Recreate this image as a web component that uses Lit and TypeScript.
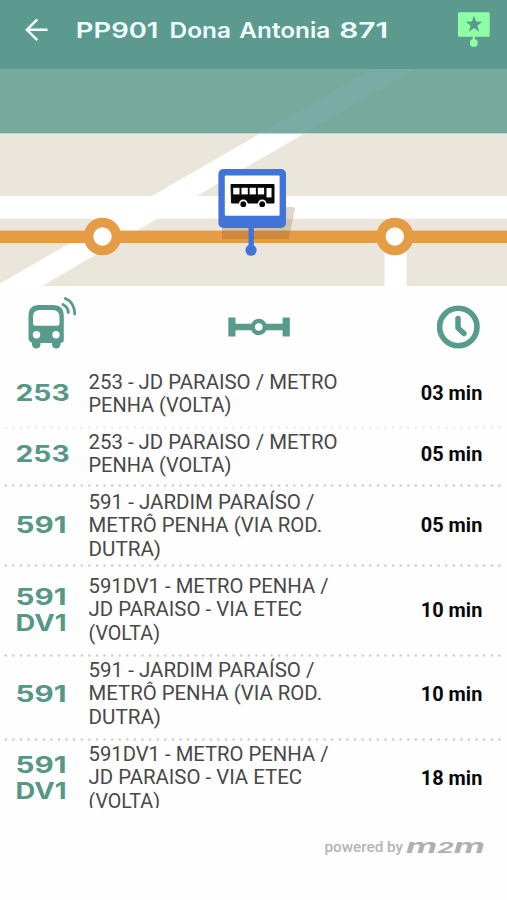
import { LitElement, html, svg, css } from "lit";
import { customElement, property } from "lit/decorators.js";
import { classMap } from "lit/directives/class-map.js";

interface Arrival {
  code: { text: string; width: number }[];
  lines: { text: string; width: number }[];
  wait: string;
  height: number;
  faint?: boolean;
  lift: number;
}

const line253 = {
  code: [{ text: "253", width: 54 }],
  lines: [
    { text: "253 - JD PARAISO / METRO", width: 249 },
    { text: "PENHA (VOLTA)", width: 143 },
  ],
};
const line591 = {
  code: [{ text: "591", width: 51 }],
  lines: [
    { text: "591 - JARDIM PARAÍSO /", width: 226 },
    { text: "METRÔ PENHA (VIA ROD.", width: 233.5 },
    { text: "DUTRA)", width: 72.5 },
  ],
};
const line591dv1 = {
  code: [
    { text: "591", width: 51 },
    { text: "DV1", width: 51 },
  ],
  lines: [
    { text: "591DV1 - METRO PENHA /", width: 240 },
    { text: "JD PARAISO - VIA ETEC", width: 213.5 },
    { text: "(VOLTA)", width: 71.5 },
  ],
};

const ARRIVALS: Arrival[] = [
  { ...line253, wait: "03 min", height: 61, faint: true, lift: 7 },
  { ...line253, wait: "05 min", height: 58, lift: 5 },
  { ...line591, wait: "05 min", height: 80, lift: 0 },
  { ...line591dv1, wait: "10 min", height: 90, lift: 1 },
  { ...line591, wait: "10 min", height: 84, lift: 7 },
  { ...line591dv1, wait: "18 min", height: 90, lift: 13 },
];

const TITLE = [
  { text: "PP901", x: 75.8, width: 82.5 },
  { text: "Dona", x: 169.5, width: 61.5 },
  { text: "Antonia", x: 239.3, width: 91 },
  { text: "871", x: 339.2, width: 49 },
];

@customElement("arrival-row")
class ArrivalRow extends LitElement {
  @property({ attribute: false }) arrival!: Arrival;

  static styles = css`
    :host { display: block; }
    .row {
      box-sizing: border-box;
      position: relative;
      display: grid;
      grid-template-columns: 72px 1fr 90px;
      align-items: center;
      padding: 0 25px 0 16px;
    }
    .row::after {
      content: "";
      position: absolute;
      left: 2px;
      right: 4px;
      bottom: -1.5px;
      height: 3px;
      background: radial-gradient(circle at center, #cacaca 0.8px, transparent 1.7px) 0 0 / 7.6px 3px repeat-x;
    }
    .faint::after { opacity: 0.4; }
    svg { display: block; overflow: visible; }
    .code {
      font: 650 22.4px Inter, sans-serif;
      fill: #579788;
    }
    .name {
      font: 400 19.5px Roboto, sans-serif;
      fill: #484848;
    }
    .wait {
      font: 700 19.6px Roboto, sans-serif;
      fill: #080808;
    }
    .time { justify-self: end; }
  `;

  render() {
    const a = this.arrival;
    return html`
      <div
        class=${classMap({ row: true, faint: !!a.faint })}
        style="height:${a.height}px;padding-bottom:${a.lift}px"
      >
        <svg width="60" height=${a.code.length * 26}>
          ${a.code.map(
            (c, i) => svg`<text class="code" x="-0.4" y=${20.8 + i * 26} textLength=${c.width} lengthAdjust="spacingAndGlyphs">${c.text}</text>`
          )}
        </svg>
        <svg width="260" height=${a.lines.length * 23.4}>
          ${a.lines.map(
            (l, i) => svg`<text class="name" x="0.5" y=${19 + i * 23.4} textLength=${l.width} lengthAdjust="spacingAndGlyphs">${l.text}</text>`
          )}
        </svg>
        <svg class="time" width="62" height="24">
          <text class="wait" x="0.8" y="19" textLength="61.5" lengthAdjust="spacingAndGlyphs">${a.wait}</text>
        </svg>
      </div>
    `;
  }
}

@customElement("app-root")
class AppRoot extends LitElement {
  static styles = css`
    :host {
      display: flex;
      flex-direction: column;
      width: 507px;
      height: 900px;
      background: #fefefe;
      overflow: hidden;
    }
    svg { display: block; flex: none; }
    .bar {
      flex: none;
      height: 69px;
      background: #5c9a90;
    }
    .title {
      font: 600 21.6px Inter, sans-serif;
      fill: #effffb;
    }
    .map { flex: none; }
    .heads {
      flex: none;
      height: 80px;
      display: flex;
      align-items: center;
      justify-content: space-between;
      padding: 2px 26px 0 28px;
      box-sizing: border-box;
    }
    .list {
      flex: none;
      height: 442px;
      overflow: hidden;
    }
    .foot {
      display: flex;
      justify-content: flex-end;
      padding: 27px 21px 0 0;
    }
    .powered {
      font: 500 14.6px Roboto, sans-serif;
      fill: #b4b4b4;
    }
    .brand {
      font: italic 700 19px Inter, sans-serif;
      fill: #b0b0b0;
    }
    .brand-digit { font-size: 14.8px; }
  `;

  private bar() {
    return html`<header class="bar">
      <svg width="507" height="69">
        <g fill="none" stroke="#f0fffc" stroke-width="2.5">
          <path d="M47.5 29.8H27.5M37.3 19.4L26.9 29.8L37.3 40.2" />
        </g>
        ${TITLE.map(
          (w) => svg`<text class="title" x=${w.x} y="37.7" textLength=${w.width} lengthAdjust="spacingAndGlyphs">${w.text}</text>`
        )}
        <rect x="458" y="12.3" width="31.7" height="24.4" rx="1.3" fill="#8effa5" />
        <path d="M473.8 36V42" stroke="#8effa5" stroke-width="2.2" />
        <circle cx="473.8" cy="43" r="3.9" fill="#8effa5" />
        <path d="M474 15.7L476.1 21.6L482.4 21.8L477.4 25.6L479.2 31.7L474 28.1L468.8 31.7L470.6 25.6L465.6 21.8L471.9 21.6Z" fill="#5c9a90" />
      </svg>
    </header>`;
  }

  private map() {
    return html`<svg class="map" width="507" height="217" viewBox="0 69 507 217">
      <rect y="69" width="507" height="217" fill="#eae6dc" />
      <g fill="#fff">
        <path d="M372 69H415L42 286H0V283.5Z" />
        <rect y="196" width="507" height="22.7" />
        <rect x="384.6" y="240" width="21.9" height="46" />
      </g>
      <rect y="69" width="507" height="64.3" fill="#78a99d" />
      <path d="M372 69H415L304.5 133.3H260.8Z" fill="#7aaca5" />
      <rect y="230.6" width="507" height="12.4" fill="#e69c45" />
      ${[102.5, 394.8].map(
        (x) => svg`<circle cx=${x} cy="236.5" r="14" fill="#fff" stroke="#e69c45" stroke-width="9.6" />`
      )}
      <path d="M222 226V239.3H288.5L295 209Q295 207 292 207H284V226Z" fill="#7a3f20" fill-opacity=".22" />
      <path d="M251.2 226V247" stroke="#4273d9" stroke-width="5.4" />
      <circle cx="251" cy="250.2" r="5.6" fill="#4273d9" />
      <rect x="218.4" y="169" width="67.6" height="59" rx="5" fill="#4273d9" />
      <rect x="224.8" y="175.6" width="54.8" height="40.2" rx="1" fill="#fff" />
      <path d="M231 184.5H274V203H231.500Z" fill="#080808" stroke="#080808" stroke-width="1" stroke-linejoin="round" />
      <g fill="#fff">
        ${[233.2, 241.5, 249.6, 257.8].map((x) => svg`<rect x=${x} y="187.8" width="6.3" height="6.6" />`)}
        <rect x="266.5" y="188" width="5" height="9.4" />
        <circle cx="243.3" cy="203.9" r="4.4" />
        <circle cx="262.2" cy="203.9" r="4.4" />
      </g>
      <circle cx="243.3" cy="204.2" r="2.9" fill="#080808" />
      <circle cx="262.2" cy="204.2" r="2.9" fill="#080808" />
    </svg>`;
  }

  private heads() {
    return html`<div class="heads">
      <svg width="52" height="60" viewBox="28 297 52 60">
        <path fill="#579b8d" fill-rule="evenodd" d="M39 305H53Q63.8 305 63.8 316V341Q62.5 343 60.5 343V344.5Q60 348.5 56.3 348.5Q52.5 348.5 52 344.5V343H40.5V344.5Q40 348.5 36.3 348.5Q32.5 348.5 32 344.5V343Q28.5 341 28.5 339V316Q28.5 305 39 305ZM40 310Q33 310 33 317V323.5Q33 325.7 35.5 325.7H57Q59.5 325.7 59.5 323.5V317Q59.5 310 52.5 310Z" />
        <circle cx="36.5" cy="334.8" r="3.7" fill="#fff" />
        <circle cx="56" cy="334.8" r="3.7" fill="#fff" />
        <path d="M63 304.5Q68 307 68.300 312.5M65.300 298.500Q74.300 302 74.800 314" fill="none" stroke="#579b8d" stroke-width="2.9" stroke-linecap="round" />
      </svg>
      <svg width="62" height="20" viewBox="228 317 62 20">
        <path d="M232 327H286" stroke="#579b8d" stroke-width="6.4" />
        <path d="M228.3 317.4H235.5V336.4H228.3ZM282.6 317.4H289.8V336.4H282.6Z" fill="#579b8d" />
        <circle cx="258.8" cy="327" r="6" fill="#fff" stroke="#579b8d" stroke-width="4.4" />
      </svg>
      <svg width="44" height="44" viewBox="437 305 44 44">
        <circle cx="458.3" cy="327" r="18.7" fill="none" stroke="#579b8d" stroke-width="5.6" />
        <path d="M458 318.5V328L464 333.5" fill="none" stroke="#579b8d" stroke-width="5.5" stroke-linecap="round" stroke-linejoin="round" />
      </svg>
    </div>`;
  }

  render() {
    return html`
      ${this.bar()} ${this.map()} ${this.heads()}
      <section class="list">
        ${ARRIVALS.map((a) => html`<arrival-row .arrival=${a}></arrival-row>`)}
      </section>
      <footer class="foot">
        <svg width="162" height="24">
          <text class="powered" x="0.5" y="17" textLength="78.5" lengthAdjust="spacingAndGlyphs">powered by</text>
          <text class="brand" x="82" y="18" textLength="79" lengthAdjust="spacingAndGlyphs">m<tspan class="brand-digit">2</tspan>m</text>
        </svg>
      </footer>
    `;
  }
}
